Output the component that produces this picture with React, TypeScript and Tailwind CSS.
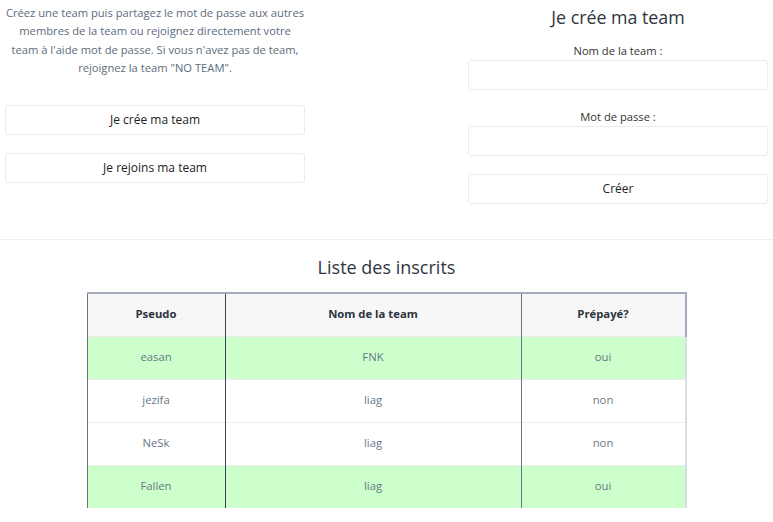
const rows = [
  { pseudo: 'easan', team: 'FNK', paid: 'oui' },
  { pseudo: 'jezifa', team: 'liag', paid: 'non' },
  { pseudo: 'NeSk', team: 'liag', paid: 'non' },
  { pseudo: 'Fallen', team: 'liag', paid: 'oui' },
];

export default function App() {
  return (
    <div className="w-[773px] h-[522px] overflow-hidden bg-white" style={{ fontFamily: '"Open Sans", sans-serif' }}>
      {/* Top: explanation + form */}
      <div className="flex h-[240px] border-b border-[#efefef]">
        <div className="w-[310px] shrink-0 pt-[4px]">
          <p className="whitespace-nowrap text-[11.2px] leading-[18.3px] text-[#5c6b7d] text-center">
            Créez une team puis partagez le mot de passe aux autres
            <br />
            membres de la team ou rejoignez directement votre
            <br />
            team à l'aide mot de passe. Si vous n'avez pas de team,
            <br />
            rejoignez la team "NO TEAM".
          </p>
          <div className="px-[5px]">
            <button className="mt-[28px] w-full h-[30px] rounded-[3px] border border-[#ececec] bg-white text-[12px] text-[#222]">
              Je crée ma team
            </button>
            <button className="mt-[18px] w-full h-[30px] rounded-[3px] border border-[#ececec] bg-white text-[12px] text-[#222]">
              Je rejoins ma team
            </button>
          </div>
        </div>
        <div className="ml-auto mr-[5px] w-[300px] flex flex-col items-center">
          <h2 className="mt-[5px] text-[17.8px] leading-[24px] text-[#2f3640]">Je crée ma team</h2>
          <label className="mt-[14px] text-[11.2px] leading-[16px] text-[#333]">Nom de la team :</label>
          <input className="mt-[1px] w-full h-[30px] rounded-[3px] border border-[#ececec] bg-white" />
          <label className="mt-[19px] text-[11.2px] leading-[16px] text-[#333]">Mot de passe :</label>
          <input className="mt-[1px] w-full h-[30px] rounded-[3px] border border-[#ececec] bg-white" />
          <button className="mt-[18px] w-full h-[30px] rounded-[3px] border border-[#ececec] bg-white text-[12px] text-[#222]">
            Créer
          </button>
        </div>
      </div>

      {/* Registered list */}
      <h2 className="mt-[15px] text-center text-[18px] leading-[24px] text-[#2f3640]">Liste des inscrits</h2>
      <div className="mt-[13px] flex justify-center">
        <table className="w-[600px] border-collapse text-[11.3px]">
          <thead>
            <tr className="bg-[#f7f7f7] h-[43px] border-t-2 border-[#a3abba]">
              <th className="w-[138px] border-l border-[#6b7585] font-bold text-[#2d3540]">Pseudo</th>
              <th className="w-[296px] border-l border-[#3b4350] font-bold text-[#2d3540]">Nom de la team</th>
              <th className="border-l border-r-2 border-[#6b7585] border-r-[#a3abba] font-bold text-[#2d3540]">Prépayé?</th>
            </tr>
          </thead>
          <tbody>
            {rows.map((r) => (
              <tr
                key={r.pseudo}
                className={`h-[43px] border-t border-[#eeeeee] ${r.paid === 'oui' ? 'bg-[#ccffcc]' : 'bg-white'}`}
              >
                <td className="border-l border-[#6b7585] text-center text-[#6a7786]">{r.pseudo}</td>
                <td className="border-l border-[#3b4350] text-center text-[#6a7786]">{r.team}</td>
                <td className="border-l border-r-2 border-[#6b7585] border-r-[#d8dde3] text-center text-[#6a7786]">{r.paid}</td>
              </tr>
            ))}
          </tbody>
        </table>
      </div>
    </div>
  );
}
